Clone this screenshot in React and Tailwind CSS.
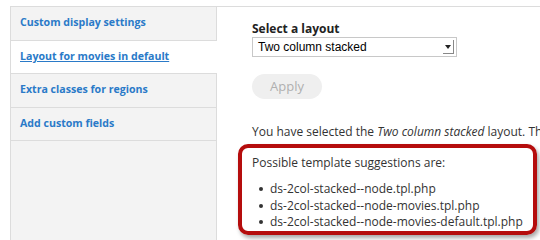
export default function App() {
  const tabs = [
    { label: "Custom display settings", active: false },
    { label: "Layout for movies in default", active: true },
    { label: "Extra classes for regions", active: false },
    { label: "Add custom fields", active: false },
  ];

  return (
    <div
      className="w-[540px] h-[240px] overflow-hidden bg-white pt-[6px] pl-[10px]"
      style={{ fontFamily: '"Open Sans", "DejaVu Sans", sans-serif' }}
    >
      <div className="flex h-full border-t border-l border-[#dcdcdc]">
        {/* vertical tabs */}
        <div className="w-[206px] shrink-0 flex flex-col bg-[#f3f3f3]">
          {tabs.map((t) => (
            <div
              key={t.label}
              className={`h-[33.5px] flex items-center pl-[9px] border-b border-[#dcdcdc] ${
                t.active ? "bg-white" : "border-r"
              }`}
            >
              <a
                href="#"
                className={`text-[10.6px] font-bold text-[#2a7ac8] ${t.active ? "underline" : ""}`}
              >
                {t.label}
              </a>
            </div>
          ))}
          <div className="flex-1 border-r border-[#dcdcdc]"></div>
        </div>

        {/* content */}
        <div className="relative flex-1 pl-[35px] pt-[14px] text-[#333]">
          <label className="block text-[12px] leading-[16px] font-bold text-[#222]">Select a layout</label>
          <div
            className="w-[205px] h-[20px] flex items-center justify-between border border-[#c8c8c8] pl-[5px] pr-[2px]"
            style={{ fontFamily: '"Liberation Sans", Arial, sans-serif' }}
          >
            <span className="text-[12px] text-black">Two column stacked</span>
            <span className="w-[11px] h-[14px] flex items-center justify-center border-r border-b border-[#888]">
              <svg width="6" height="4" viewBox="0 0 6 4">
                <path d="M0 0h6L3 4z" fill="#222" />
              </svg>
            </span>
          </div>

          <button className="mt-[17px] w-[70px] h-[25px] rounded-full bg-[#efefef] text-[13px] text-[#b0b0b0]">
            Apply
          </button>

          <p className="mt-[24px] text-[12px] leading-[17px] whitespace-nowrap">
            You have selected the <em>Two column stacked</em> layout. The
          </p>

          <div className="mt-[14px] text-[12px] leading-[17px]">
            <p>Possible template suggestions are:</p>
            <ul className="mt-[10px] pl-[7px] leading-[16.5px]">
              {[
                "ds-2col-stacked--node.tpl.php",
                "ds-2col-stacked--node-movies.tpl.php",
                "ds-2col-stacked--node-movies-default.tpl.php",
              ].map((s) => (
                <li key={s} className="flex items-center whitespace-nowrap">
                  <span className="w-[4px] h-[4px] rounded-full bg-[#333] mr-[7px]"></span>
                  {s}
                </li>
              ))}
            </ul>
          </div>

          {/* red annotation box */}
          <div className="absolute left-[21px] top-[137px] w-[299px] h-[91px] rounded-[10px] border-[4px] border-[#b50d0d] shadow-[2px_3px_4px_rgba(0,0,0,0.35)]"></div>
        </div>
      </div>
    </div>
  );
}
